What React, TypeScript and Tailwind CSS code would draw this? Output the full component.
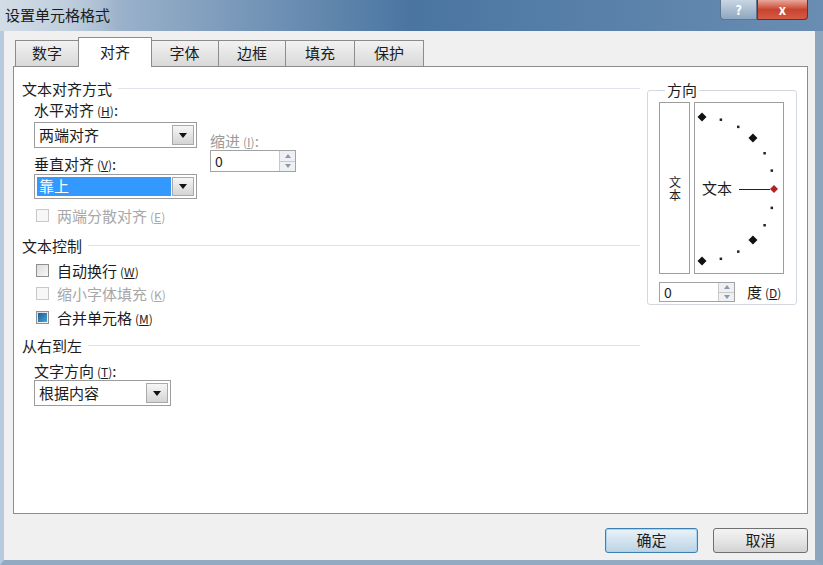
import React from 'react';

const font = "[font-family:'Noto_Sans_CJK_SC',sans-serif]";

function Acc({ k }: { k: string }) {
  return (
    <span className="text-[12px] ml-[3px]">
      (<span className="underline">{k}</span>)
    </span>
  );
}

function DropBtn() {
  return (
    <div className="w-[22px] h-full border border-[#a9a9a9] bg-gradient-to-b from-[#f6f6f6] to-[#d4d4d4] flex items-center justify-center">
      <svg width="8" height="5" viewBox="0 0 8 5">
        <path d="M0 0h8L4 5z" fill="#111" />
      </svg>
    </div>
  );
}

function Select({ w, value, hl }: { w: string; value: string; hl?: boolean }) {
  return (
    <div className={`${w} h-full border border-[#9c9c9c] bg-white flex items-center p-[2px] gap-[1px]`}>
      <div
        className={`flex-1 h-full flex items-center pl-[2px] text-[15px] ${
          hl ? 'bg-[#3399ff] text-white' : 'text-[#1c1c1c]'
        }`}
      >
        {value}
      </div>
      <DropBtn />
    </div>
  );
}

function Spin({ w, value }: { w: string; value: string }) {
  return (
    <div className={`${w} h-full border border-[#a3a3a3] bg-white flex items-center`}>
      <div className="flex-1 pl-[4px] text-[14px] text-[#1c1c1c]">{value}</div>
      <div className="w-[16px] h-full flex flex-col bg-[#eef0f3] border-l border-[#c9c9c9]">
        <div className="flex-1 flex items-center justify-center border-b border-[#c9c9c9]">
          <svg width="6" height="4" viewBox="0 0 6 4">
            <path d="M0 4h6L3 0z" fill="#8a98a8" />
          </svg>
        </div>
        <div className="flex-1 flex items-center justify-center">
          <svg width="6" height="4" viewBox="0 0 6 4">
            <path d="M0 0h6L3 4z" fill="#8a98a8" />
          </svg>
        </div>
      </div>
    </div>
  );
}

function Check({ state, label, k }: { state: 'off' | 'on' | 'disabled'; label: string; k: string }) {
  return (
    <div className={`h-[17px] flex items-center pl-[14px] ${state === 'disabled' ? 'text-[#a8a8a8]' : 'text-[#1c1c1c]'}`}>
      <div
        className={`w-[13px] h-[13px] border flex items-center justify-center ${
          state === 'disabled' ? 'border-[#c8c8c8] bg-[#f7f7f7]' : 'border-[#8e8f8f] bg-gradient-to-br from-[#dcdcdc] to-[#f8f8f8]'
        }`}
      >
        {state === 'on' && <div className="w-[9px] h-[9px] bg-gradient-to-br from-[#1c5f93] to-[#4aa3dc]" />}
      </div>
      <span className="ml-[8px] text-[15px] leading-[17px]">
        {label}
        <Acc k={k} />
      </span>
    </div>
  );
}

function Header({ text, mt }: { text: string; mt: string }) {
  return (
    <div className={`${mt} h-[17px] flex items-center gap-[6px]`}>
      <span className="text-[15px] leading-[17px] text-[#1c1c1c]">{text}</span>
      <div className="flex-1 h-px bg-[#dde3e8]" />
    </div>
  );
}

function Label({ text, k, mt, dim }: { text: string; k: string; mt: string; dim?: boolean }) {
  return (
    <div className={`${mt} h-[17px] text-[15px] leading-[17px] ${dim ? 'text-[#9a9a9a]' : 'text-[#1c1c1c]'}`}>
      {text}
      <Acc k={k} />:
    </div>
  );
}

function Semicircle() {
  const cx = 7;
  const cy = 86;
  const r = 72;
  const dots = [];
  for (let i = 0; i <= 12; i++) {
    const a = ((-90 + i * 15) * Math.PI) / 180;
    dots.push({ x: cx + r * Math.cos(a), y: cy + r * Math.sin(a), i });
  }
  return (
    <svg width="88" height="170" viewBox="0 0 88 170">
      {dots.map((d) => {
        if (d.i === 6) {
          return <path key={d.i} d={`M${d.x} ${d.y - 4}l4 4l-4 4l-4 -4z`} fill="#b22222" />;
        }
        if (d.i % 3 === 0) {
          return <path key={d.i} d={`M${d.x} ${d.y - 4.5}l4.5 4.5l-4.5 4.5l-4.5 -4.5z`} fill="#111" />;
        }
        return <rect key={d.i} x={d.x - 1} y={d.y - 1} width="2.5" height="2.5" fill="#222" />;
      })}
      <text x="7" y="91" fontSize="15" fontFamily="Noto Sans CJK SC, sans-serif" fill="#1c1c1c">
        文本
      </text>
      <line x1="44" y1="86.5" x2="75" y2="86.5" stroke="#222" strokeWidth="1" />
    </svg>
  );
}

const tabs = [
  { name: '数字', w: 'w-[64px]' },
  { name: '对齐', w: 'w-[74px]', active: true },
  { name: '字体', w: 'w-[69px]' },
  { name: '边框', w: 'w-[68px]' },
  { name: '填充', w: 'w-[70px]' },
  { name: '保护', w: 'w-[70px]' },
];

export default function App() {
  return (
    <div className={`w-[823px] h-[565px] flex flex-col overflow-hidden bg-[#9db4ca] ${font}`}>
      {/* title bar */}
      <div className="h-[31px] flex items-start bg-gradient-to-r from-[#bccbdb] via-[#4a75a1] to-[#6a8db2]">
        <div className="h-full flex items-center pl-[5px] pr-[10px] text-[15px] text-[#1b1b1b] bg-gradient-to-r from-[#d3dde7] via-[#c2d0de] to-transparent">
          设置单元格格式
        </div>
        <div className="flex-1" />
        <div className="w-[37px] h-[20px] rounded-bl-[4px] border border-t-0 border-[#5c7590] bg-gradient-to-b from-[#c9d6e3] to-[#8ea7c0] flex items-center justify-center text-white text-[13px] font-bold">
          ?
        </div>
        <div className="w-[51px] h-[20px] rounded-br-[4px] border border-t-0 border-[#7a2a20] bg-gradient-to-b from-[#e7a89b] via-[#c8442f] to-[#d55a44] flex items-center justify-center text-white text-[13px] font-bold mr-[15px]">
          x
        </div>
      </div>

      {/* body */}
      <div className="flex-1 flex flex-col bg-[#f0f0f0] border-l-[4px] border-l-[#b7cbde] border-r-[8px] border-r-[#8ea6bd] border-b-[5px] border-b-[#93abc2] pl-[9px] pr-[7px] pt-[9px]">
        {/* tabs */}
        <div className="h-[26px] flex items-end pl-[2px]">
          {tabs.map((t) =>
            t.active ? (
              <div
                key={t.name}
                className={`${t.w} -mx-[1px] h-[30px] -mb-px z-10 relative bg-white border border-b-0 border-[#8c8c8c] flex items-center justify-center text-[15px] text-[#1c1c1c]`}
              >
                {t.name}
              </div>
            ) : (
              <div
                key={t.name}
                className={`${t.w} h-[26px] border border-b-0 border-[#8c8c8c] -ml-px first:ml-0 bg-gradient-to-b from-[#f2f2f2] to-[#d9d9d9] flex items-center justify-center text-[15px] text-[#1c1c1c]`}
              >
                {t.name}
              </div>
            )
          )}
        </div>

        {/* panel */}
        <div className="h-[448px] bg-white border border-[#8c8c8c] flex pl-[8px] pr-[10px] pt-[13px]">
          {/* left column */}
          <div className="flex-1 flex flex-col">
            <Header text="文本对齐方式" mt="mt-0" />
            <div className="flex pl-[12px] mt-[4px]">
              <div className="flex flex-col">
                <Label text="水平对齐" k="H" mt="mt-0" />
                <div className="mt-[4px] h-[26px]">
                  <Select w="w-[163px]" value="两端对齐" />
                </div>
                <Label text="垂直对齐" k="V" mt="mt-[7px]" />
                <div className="mt-[2px] h-[25px]">
                  <Select w="w-[163px]" value="靠上" hl />
                </div>
              </div>
              <div className="flex flex-col ml-[13px] pt-[31px]">
                <Label text="缩进" k="I" mt="mt-0" dim />
                <div className="mt-[1px] h-[22px]">
                  <Spin w="w-[86px]" value="0" />
                </div>
              </div>
            </div>
            <div className="mt-[8px]">
              <Check state="disabled" label="两端分散对齐" k="E" />
            </div>

            <Header text="文本控制" mt="mt-[13px]" />
            <div className="mt-[8px]">
              <Check state="off" label="自动换行" k="W" />
            </div>
            <div className="mt-[6px]">
              <Check state="disabled" label="缩小字体填充" k="K" />
            </div>
            <div className="mt-[7px]">
              <Check state="on" label="合并单元格" k="M" />
            </div>

            <Header text="从右到左" mt="mt-[11px]" />
            <div className="pl-[12px] flex flex-col">
              <Label text="文字方向" k="T" mt="mt-[8px]" />
              <div className="mt-[1px] h-[26px]">
                <Select w="w-[137px]" value="根据内容" />
              </div>
            </div>
          </div>

          {/* orientation group */}
          <fieldset className="ml-[7px] mt-[2px] w-[150px] h-[223px] border border-[#d3d9df] rounded-[3px] px-[11px] pb-[3px] flex flex-col">
            <legend className="ml-[6px] px-[2px] text-[15px] leading-[16px] text-[#1c1c1c]">方向</legend>
            <div className="mt-[4px] h-[172px] flex gap-[4px]">
              <div className="w-[31px] border border-[#9e9e9e] flex items-center justify-center pt-[2px]">
                <span className="[writing-mode:vertical-rl] text-[12px] leading-[14px] tracking-[1px] text-[#1c1c1c]">
                  文本
                </span>
              </div>
              <div className="w-[90px] border border-[#9e9e9e] bg-white">
                <Semicircle />
              </div>
            </div>
            <div className="mt-[8px] h-[20px] flex items-center gap-[12px]">
              <Spin w="w-[76px]" value="0" />
              <span className="text-[15px] text-[#1c1c1c]">
                度<Acc k="D" />
              </span>
            </div>
          </fieldset>
        </div>

        {/* buttons */}
        <div className="mt-[14px] flex justify-end gap-[15px]">
          <div className="w-[93px] h-[25px] rounded-[3px] border border-[#3c7fb1] bg-gradient-to-b from-[#eaf3fa] via-[#d3e3ef] to-[#bcd3e4] shadow-[inset_0_0_0_1px_#a8d6f2] flex items-center justify-center text-[15px] text-[#1c1c1c]">
            确定
          </div>
          <div className="w-[95px] h-[25px] rounded-[3px] border border-[#707070] bg-gradient-to-b from-[#f3f3f3] via-[#e6e6e6] to-[#d2d2d2] flex items-center justify-center text-[15px] text-[#1c1c1c]">
            取消
          </div>
        </div>
      </div>
    </div>
  );
}
